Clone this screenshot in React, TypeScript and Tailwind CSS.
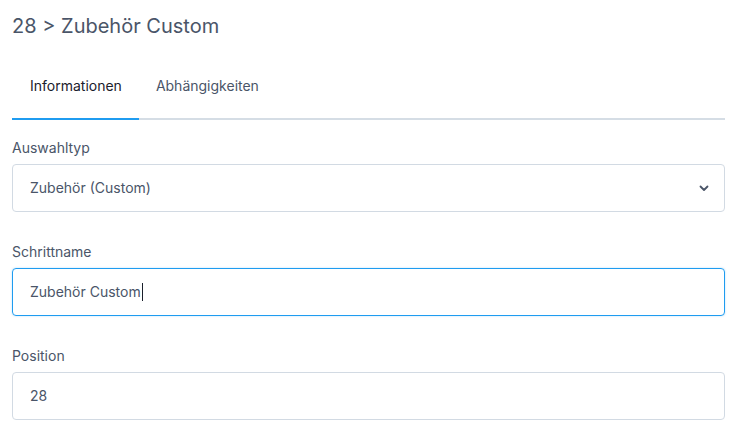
import { useState } from "react";

const tabs = ["Informationen", "Abhängigkeiten"];

function Label({ children }: { children: React.ReactNode }) {
  return <div className="text-sm leading-5 text-[#4a5568]">{children}</div>;
}

export default function App() {
  const [active, setActive] = useState(0);

  return (
    <div
      className="min-h-screen bg-white pl-3 pt-3"
      style={{ fontFamily: "Inter, 'Noto Sans', sans-serif" }}
    >
      <div className="w-[713px]">
        <h1 className="text-xl leading-7 text-[#4a5568]">28 &gt; Zubehör Custom</h1>

        <div className="mt-4 flex border-b-2 border-[#d5dde5]">
          {tabs.map((tab, i) => (
            <button
              key={tab}
              onClick={() => setActive(i)}
              className={
                i === active
                  ? "-mb-[2px] border-b-2 border-[#1f9cf0] pl-[18px] pr-[17px] pt-5 pb-[22px] text-sm leading-5 text-[#1a202c]"
                  : "-mb-[2px] border-b-2 border-transparent px-[17px] pt-5 pb-[22px] text-sm leading-5 text-[#4a5568]"
              }
            >
              {tab}
            </button>
          ))}
        </div>

        <div className="mt-[18px] flex flex-col gap-[30px]">
          <div>
            <Label>Auswahltyp</Label>
            <div className="mt-1.5 flex h-12 items-center justify-between rounded border border-[#d2dae3] pl-[17px] pr-[15px] text-sm text-[#4a5568]">
              <span>Zubehör (Custom)</span>
              <svg width="10" height="7" viewBox="0 0 10 7" fill="none">
                <path d="M1.5 1.5 5 5l3.5-3.5" stroke="#4a5568" strokeWidth="1.8" strokeLinecap="round" strokeLinejoin="round" />
              </svg>
            </div>
          </div>

          <div>
            <Label>Schrittname</Label>
            <div className="mt-1.5 flex h-12 items-center rounded border border-[#1f9cf0] pl-[17px] text-sm text-[#4a5568] shadow-[0_0_2px_rgba(31,156,240,0.35)]">
              <span>Zubehör Custom</span>
              <span className="ml-px inline-block h-[18px] w-px bg-[#1a202c]" />
            </div>
          </div>

          <div>
            <Label>Position</Label>
            <div className="mt-1.5 flex h-12 items-center rounded border border-[#d2dae3] pl-[17px] text-sm text-[#4a5568]">
              28
            </div>
          </div>
        </div>
      </div>
    </div>
  );
}
